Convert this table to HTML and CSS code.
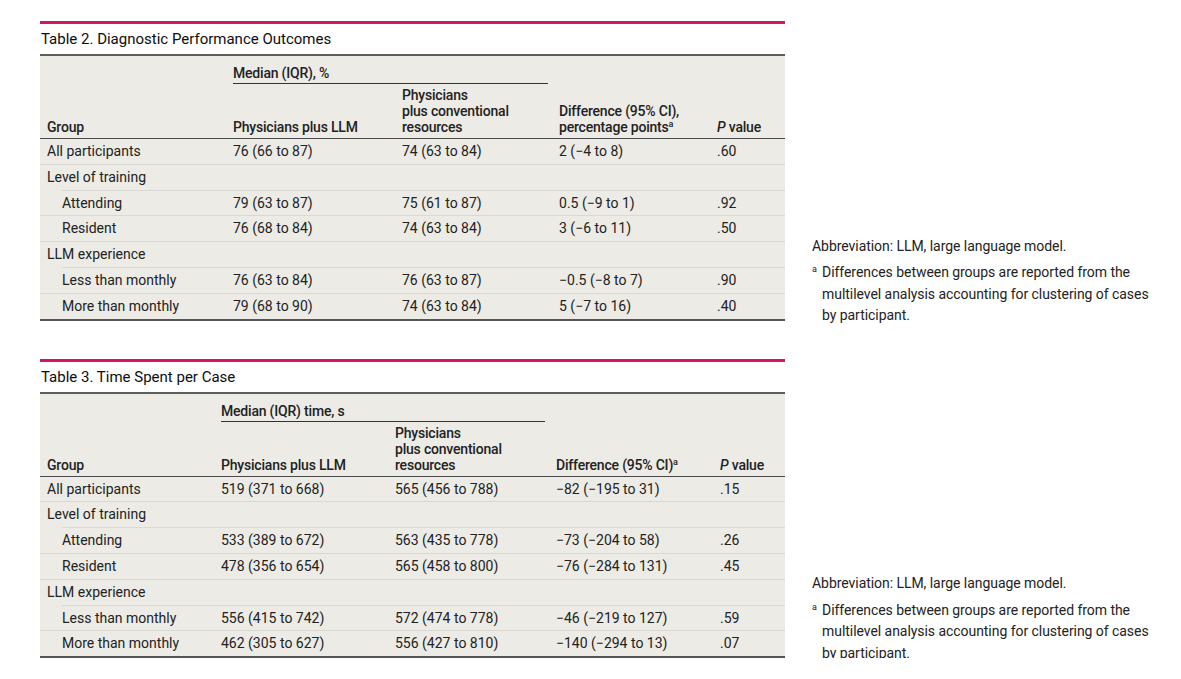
FILE: index.html
```html
<!DOCTYPE html>
<html>
<head>
<meta charset="utf-8">
<link rel="stylesheet" href="styles.css">
</head>
<body>
<div class="page">
  <section class="block">
    <div class="tablewrap">
      <div class="bar"></div>
      <h2 class="title">Table 2. Diagnostic Performance Outcomes</h2>
      <table class="data t2">
        <colgroup><col class="c1"><col class="c2"><col class="c3"><col class="c4"><col class="c5"></colgroup>
        <thead>
          <tr class="h1">
            <th rowspan="2" class="hb">Group</th>
            <th colspan="2" class="span"><div class="spanline">Median (IQR), %</div></th>
            <th rowspan="2" class="hb">Difference (95% CI),<br>percentage points<sup>a</sup></th>
            <th rowspan="2" class="hb"><i>P</i> value</th>
          </tr>
          <tr class="h2">
            <th class="hb">Physicians plus LLM</th>
            <th class="hb">Physicians<br>plus conventional<br>resources</th>
          </tr>
        </thead>
        <tbody>
          <tr><td>All participants</td><td>76 (66 to 87)</td><td>74 (63 to 84)</td><td>2 (−4 to 8)</td><td>.60</td></tr>
          <tr class="sub"><td>Level of training</td><td></td><td></td><td></td><td></td></tr>
          <tr><td class="ind">Attending</td><td>79 (63 to 87)</td><td>75 (61 to 87)</td><td>0.5 (−9 to 1)</td><td>.92</td></tr>
          <tr><td class="ind">Resident</td><td>76 (68 to 84)</td><td>74 (63 to 84)</td><td>3 (−6 to 11)</td><td>.50</td></tr>
          <tr class="sub"><td>LLM experience</td><td></td><td></td><td></td><td></td></tr>
          <tr><td class="ind">Less than monthly</td><td>76 (63 to 84)</td><td>76 (63 to 87)</td><td>−0.5 (−8 to 7)</td><td>.90</td></tr>
          <tr class="last"><td class="ind">More than monthly</td><td>79 (68 to 90)</td><td>74 (63 to 84)</td><td>5 (−7 to 16)</td><td>.40</td></tr>
        </tbody>
      </table>
    </div>
    <div class="notes">
      <p class="abbr">Abbreviation: LLM, large language model.</p>
      <p class="fn"><sup>a</sup><span>Differences between groups are reported from the multilevel analysis accounting for clustering of cases by participant.</span></p>
    </div>
  </section>

  <section class="block second">
    <div class="tablewrap">
      <div class="bar"></div>
      <h2 class="title">Table 3. Time Spent per Case</h2>
      <table class="data t3">
        <colgroup><col class="c1"><col class="c2"><col class="c3"><col class="c4"><col class="c5"></colgroup>
        <thead>
          <tr class="h1">
            <th rowspan="2" class="hb">Group</th>
            <th colspan="2" class="span"><div class="spanline">Median (IQR) time, s</div></th>
            <th rowspan="2" class="hb">Difference (95% CI)<sup>a</sup></th>
            <th rowspan="2" class="hb"><i>P</i> value</th>
          </tr>
          <tr class="h2">
            <th class="hb">Physicians plus LLM</th>
            <th class="hb">Physicians<br>plus conventional<br>resources</th>
          </tr>
        </thead>
        <tbody>
          <tr><td>All participants</td><td>519 (371 to 668)</td><td>565 (456 to 788)</td><td>−82 (−195 to 31)</td><td>.15</td></tr>
          <tr class="sub"><td>Level of training</td><td></td><td></td><td></td><td></td></tr>
          <tr><td class="ind">Attending</td><td>533 (389 to 672)</td><td>563 (435 to 778)</td><td>−73 (−204 to 58)</td><td>.26</td></tr>
          <tr><td class="ind">Resident</td><td>478 (356 to 654)</td><td>565 (458 to 800)</td><td>−76 (−284 to 131)</td><td>.45</td></tr>
          <tr class="sub"><td>LLM experience</td><td></td><td></td><td></td><td></td></tr>
          <tr><td class="ind">Less than monthly</td><td>556 (415 to 742)</td><td>572 (474 to 778)</td><td>−46 (−219 to 127)</td><td>.59</td></tr>
          <tr class="last"><td class="ind">More than monthly</td><td>462 (305 to 627)</td><td>556 (427 to 810)</td><td>−140 (−294 to 13)</td><td>.07</td></tr>
        </tbody>
      </table>
    </div>
    <div class="notes">
      <p class="abbr">Abbreviation: LLM, large language model.</p>
      <p class="fn"><sup>a</sup><span>Differences between groups are reported from the multilevel analysis accounting for clustering of cases by participant.</span></p>
    </div>
  </section>
</div>
</body>
</html>
```

FILE: styles.css
```css
html, body {
  margin: 0;
  padding: 0;
  background: #ffffff;
}

body {
  font-family: Roboto, "Liberation Sans", sans-serif;
  color: #222222;
}

.page {
  padding: 21px 0 0 40px;
}

.block {
  display: flex;
  align-items: flex-end;
}

.block.second {
  margin-top: 38px;
}

.tablewrap {
  width: 745px;
  flex: none;
}

.bar {
  height: 3px;
  background: #d6136a;
}

.title {
  margin: 0;
  padding: 5px 0 0 1px;
  height: 25px;
  font-size: 15px;
  font-weight: 400;
  line-height: 20px;
  color: #0d0d0d;
}

.data {
  width: 745px;
  table-layout: fixed;
  border-collapse: separate;
  border-spacing: 0;
  background: #ecebe6;
  border-top: 2px solid #5d5d5d;
  border-bottom: 2px solid #555555;
  font-size: 14px;
}

.t2 .c1 { width: 186px; }
.t2 .c2 { width: 169px; }
.t2 .c3 { width: 157px; }
.t2 .c4 { width: 158px; }
.t2 .c5 { width: 75px; }

.t3 .c1 { width: 174px; }
.t3 .c2 { width: 174px; }
.t3 .c3 { width: 161px; }
.t3 .c4 { width: 164px; }
.t3 .c5 { width: 72px; }

.data th {
  text-align: left;
  font-weight: 500;
  letter-spacing: -0.2px;
  line-height: 16px;
  padding: 0 0 0 7px;
  color: #222222;
}

.data th.hb {
  vertical-align: bottom;
  padding-bottom: 3px;
  border-bottom: 1.5px solid #4a4a4a;
}

.data th sup {
  font-size: 9px;
  line-height: 0;
  vertical-align: 5px;
}

.data th i {
  font-style: italic;
}

.data th.span {
  padding: 9px 4px 0 7px;
  vertical-align: top;
}

.spanline {
  padding-bottom: 2px;
  border-bottom: 1px solid #333333;
}

.h2 th.hb {
  padding-top: 3px;
}

.data td {
  padding: 4px 0 4px 7px;
  line-height: 16.8px;
  border-bottom: 1px solid #d9d8d2;
  white-space: nowrap;
  color: #222222;
}

.data td.ind {
  padding-left: 22px;
}

.data tr.sub td {
  border-bottom-color: transparent;
  background-image: linear-gradient(#d9d8d2, #d9d8d2);
  background-repeat: no-repeat;
  background-origin: border-box;
  background-position: left bottom;
  background-size: 100% 1px;
}

.data tr.sub td:first-child {
  background-position: 22px bottom;
}

.data tr.last td {
  border-bottom: none;
}

.notes {
  margin-left: 27px;
  margin-bottom: -6px;
  width: 340px;
  font-size: 14px;
  line-height: 21.5px;
  letter-spacing: -0.05px;
  color: #222222;
}

.notes p {
  margin: 0;
}

.notes .abbr {
  margin-bottom: 5px;
}

.notes .fn {
  display: flex;
}

.notes .fn sup {
  flex: none;
  width: 10px;
  font-size: 9px;
  line-height: 14px;
  vertical-align: top;
}

.notes .fn span {
  flex: 1;
}
```
